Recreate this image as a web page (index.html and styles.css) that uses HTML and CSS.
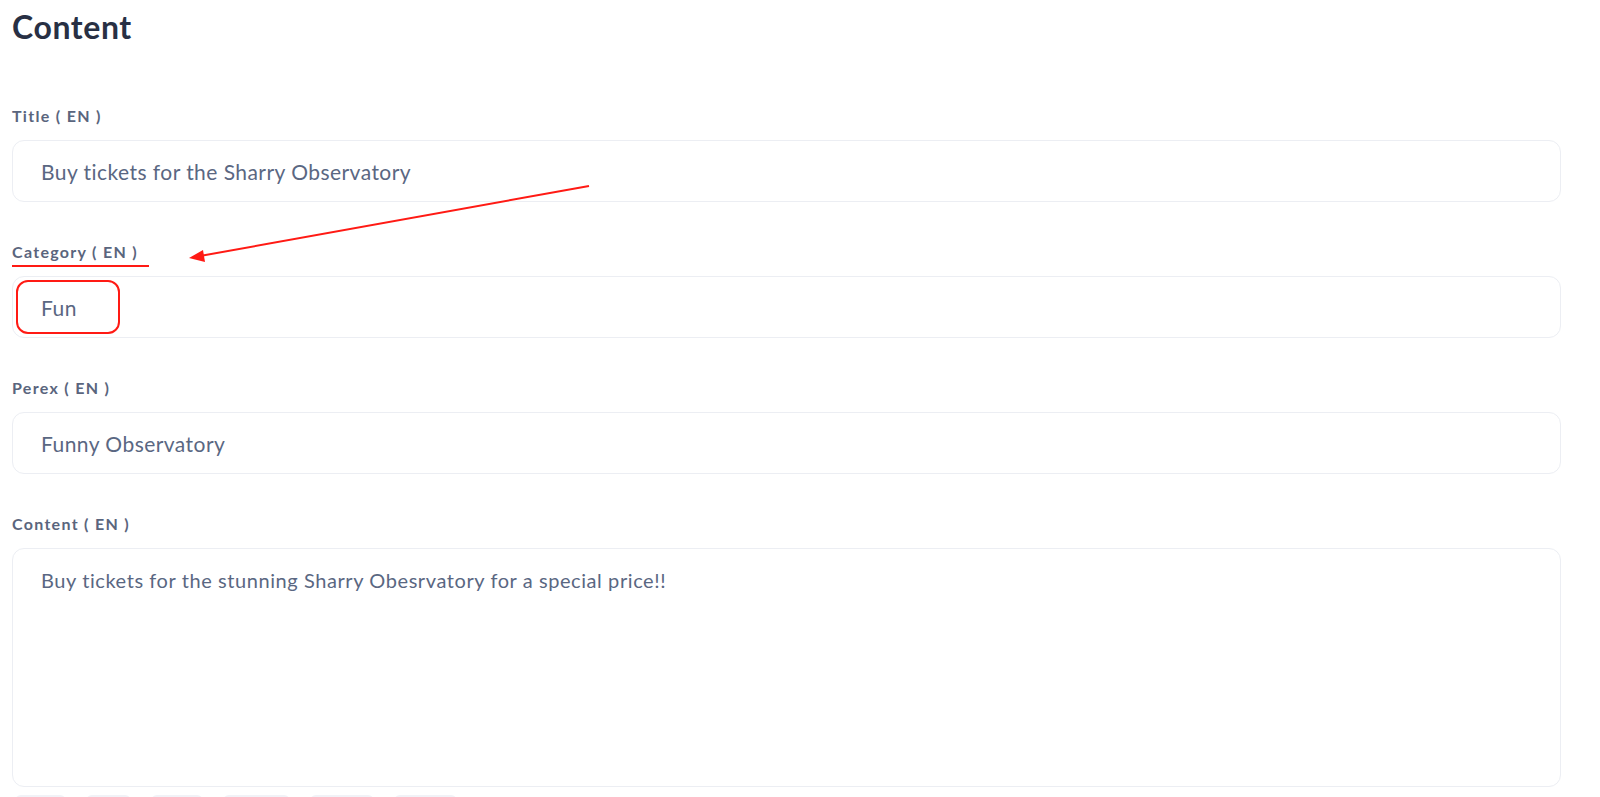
FILE: index.html
```html
<!DOCTYPE html>
<html lang="en">
<head>
<meta charset="utf-8">
<title>Content</title>
<link rel="stylesheet" href="styles.css">
</head>
<body>
<main class="page">
  <h1 class="heading">Content</h1>

  <div class="field">
    <label class="label">Title ( EN )</label>
    <div class="input">Buy tickets for the Sharry Observatory</div>
  </div>

  <div class="field">
    <label class="label">Category ( EN )</label>
    <div class="input">Fun</div>
  </div>

  <div class="field">
    <label class="label">Perex ( EN )</label>
    <div class="input">Funny Observatory</div>
  </div>

  <div class="field">
    <label class="label">Content ( EN )</label>
    <div class="textarea">Buy tickets for the stunning Sharry Obesrvatory for a special price!!</div>
    <div class="toolbar">
      <span class="tool t1"></span>
      <span class="tool t2"></span>
      <span class="tool t3"></span>
      <span class="tool t4"></span>
      <span class="tool t5"></span>
      <span class="tool t6"></span>
    </div>
  </div>

  <div class="mark-underline"></div>
  <div class="mark-box"></div>
  <svg class="mark-arrow" width="1600" height="797" viewBox="0 0 1600 797">
    <line x1="589" y1="186" x2="200" y2="256" stroke="#ff1a14" stroke-width="2"/>
    <polygon points="189,258 203,250 205,262" fill="#ff1a14"/>
  </svg>
</main>
</body>
</html>
```
FILE: styles.css
```css
html, body {
  margin: 0;
  padding: 0;
  background: #ffffff;
  overflow: hidden;
}

.page {
  position: relative;
  height: 797px;
  padding: 0 39px 0 12px;
  font-family: Lato, "Open Sans", sans-serif;
  box-sizing: border-box;
}

.heading {
  margin: 0;
  padding-top: 7px;
  font-size: 32px;
  line-height: 40px;
  font-weight: 700;
  color: #283044;
  letter-spacing: 0.6px;
}

.field {
  display: flex;
  flex-direction: column;
  margin-top: 40px;
}

.heading + .field {
  margin-top: 59px;
}

.label {
  font-size: 16px;
  line-height: 20px;
  font-weight: 700;
  color: #5a657d;
  margin-bottom: 14px;
  letter-spacing: 1.3px;
}

.input {
  height: 62px;
  box-sizing: border-box;
  border: 1px solid #eceef3;
  border-radius: 12px;
  padding: 0 28px;
  display: flex;
  align-items: center;
  font-size: 21px;
  color: #5a6782;
  letter-spacing: 0.45px;
}

.textarea {
  height: 239px;
  box-sizing: border-box;
  border: 1px solid #eceef3;
  border-radius: 12px;
  padding: 19px 28px;
  font-size: 20px;
  line-height: 24px;
  font-weight: 400;
  color: #5a6782;
  letter-spacing: 0.58px;
}

.toolbar {
  display: flex;
  gap: 20px;
  margin-top: 8px;
  padding-left: 3px;
}

.tool {
  display: block;
  height: 30px;
  border-radius: 6px;
  background: #f1f2f7;
}
.t1 { width: 51px; }
.t2 { width: 45px; }
.t3 { width: 52px; }
.t4 { width: 67px; }
.t5 { width: 64px; }
.t6 { width: 63px; }

.mark-underline {
  position: absolute;
  left: 12px;
  top: 265px;
  width: 137px;
  height: 2px;
  background: #ff1a14;
}

.mark-box {
  position: absolute;
  left: 16px;
  top: 280px;
  width: 104px;
  height: 54px;
  box-sizing: border-box;
  border: 2px solid #ff1a14;
  border-radius: 12px;
}

.mark-arrow {
  position: absolute;
  left: 0;
  top: 0;
  pointer-events: none;
}
```
